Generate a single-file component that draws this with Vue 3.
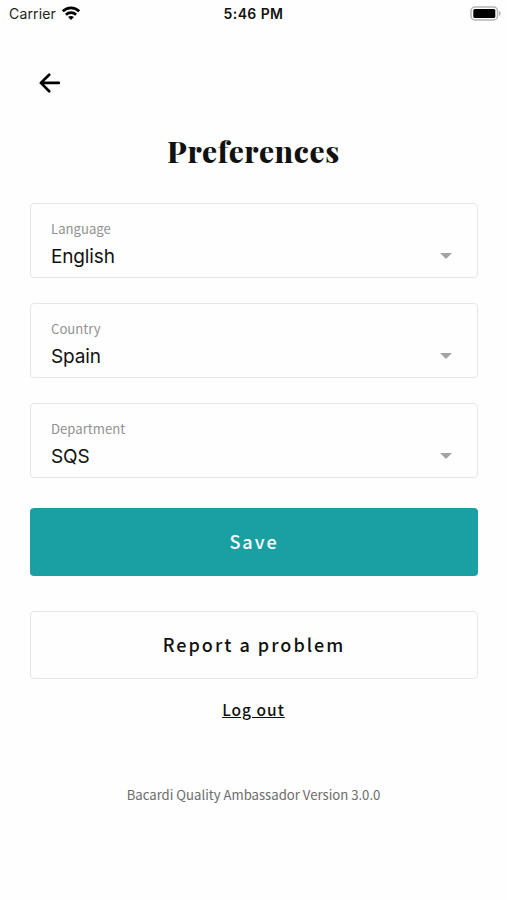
<script setup>
const fields = [
  { label: 'Language', value: 'English' },
  { label: 'Country', value: 'Spain' },
  { label: 'Department', value: 'SQS' },
]
</script>

<template>
  <div class="screen">
    <header class="status">
      <div class="carrier">
        <span>Carrier</span>
        <svg class="wifi" viewBox="0 0 20 15" width="20" height="15">
          <g fill="none" stroke="#000" stroke-width="2.7">
            <path d="M1.8 5.3C6.4 .7 13.6 .7 18.2 5.3" />
            <path d="M4.9 8.7C7.8 6 12.2 6 15.1 8.7" />
          </g>
          <path d="M7.1 11.1C8.8 9.7 11.2 9.7 12.9 11.1L10 14Z" />
        </svg>
      </div>
      <span class="time">5:46 PM</span>
      <div class="power">
        <svg viewBox="0 0 32 16" width="32" height="16">
          <rect x="1" y="1" width="26.5" height="13" rx="4" fill="#fff" stroke="#b4b4b4" stroke-width="1.5" />
          <rect x="3.3" y="3" width="22" height="9" rx="1.5" fill="#000" />
          <path d="M29 5C31.4 6 31.4 9 29 10Z" fill="#b4b4b4" />
        </svg>
      </div>
    </header>

    <button class="back" aria-label="Back">
      <svg viewBox="0 0 22 20" width="22" height="20" fill="none" stroke="#000" stroke-width="2.7" stroke-linecap="round" stroke-linejoin="round">
        <path d="M19.8 9.9H2M10.2 1.7L1.9 9.9L10.2 18.2" />
      </svg>
    </button>

    <h1 class="title">Preferences</h1>

    <main class="form">
      <div v-for="field in fields" :key="field.label" class="field">
        <div class="texts">
          <span class="label">{{ field.label }}</span>
          <span class="value">{{ field.value }}</span>
        </div>
        <svg class="caret" viewBox="0 0 12 6" width="12" height="6"><path d="M0 0H12L6 6Z" fill="#a3a3a3" /></svg>
      </div>
      <button class="button save">Save</button>
      <button class="button report">Report a problem</button>
    </main>

    <a class="logout">Log out</a>
    <footer class="version">Bacardi Quality Ambassador Version 3.0.0</footer>
  </div>
</template>

<style>
body {
  margin: 0;
  background: #fff;
}
</style>

<style scoped>
.screen {
  display: flex;
  flex-direction: column;
  width: 507px;
  height: 900px;
  overflow: hidden;
  background: #fefefe;
  color: #111;
  font-family: "Noto Sans CJK SC", "Noto Sans", sans-serif;
}
button {
  padding: 0;
  border: 0;
  background: none;
  font-family: inherit;
}
svg {
  display: block;
}
.status {
  display: grid;
  grid-template-columns: 1fr auto 1fr;
  height: 28px;
  padding: 0 5px 0 9px;
  box-sizing: border-box;
  align-items: center;
  font: 14px/28px Inter, sans-serif;
}
.carrier {
  display: flex;
  align-items: center;
  gap: 5px;
  letter-spacing: 0.15px;
  color: #222;
}
.wifi {
  margin-top: -2px;
}
.time {
  margin-right: 4px;
  font-weight: 600;
  letter-spacing: 0.4px;
}
.power {
  display: flex;
  justify-content: flex-end;
}
.back {
  align-self: flex-start;
  margin: 45px 0 0 39px;
}
.title {
  margin: 38px 0 0;
  text-align: center;
  font: 800 30px/40px "Playfair Display", "Liberation Serif", serif;
  letter-spacing: 0.7px;
}
.form {
  display: flex;
  flex-direction: column;
  margin: 32px 29px 0 30px;
}
.field {
  display: flex;
  justify-content: space-between;
  align-items: flex-end;
  height: 75px;
  margin-bottom: 25px;
  padding: 0 25px 5px 20px;
  box-sizing: border-box;
  border: 1px solid #e6e6e6;
  border-radius: 4px;
}
.texts {
  display: flex;
  flex-direction: column;
}
.label {
  margin-bottom: 2px;
  font-size: 13.15px;
  line-height: 22px;
  color: #929292;
}
.value {
  font: 19px/30px Inter, sans-serif;
  letter-spacing: -0.15px;
  color: #111;
}
.caret {
  margin-bottom: 13px;
}
.button {
  height: 68px;
  box-sizing: border-box;
  border-radius: 4px;
  font-size: 18px;
  font-weight: 500;
  letter-spacing: 2px;
}
.save {
  margin-top: 5px;
  padding-bottom: 3px;
  background: #1a9fa3;
  color: #fff;
}
.report {
  margin-top: 35px;
  padding-bottom: 3px;
  border: 1px solid #e6e6e6;
  color: #111;
}
.logout {
  align-self: center;
  margin-top: 17px;
  font-size: 15.5px;
  font-weight: 500;
  line-height: 26px;
  letter-spacing: 1px;
  text-decoration: underline;
}
.version {
  margin-top: 62px;
  text-align: center;
  font-size: 13.15px;
  line-height: 22px;
  color: #6c6c6c;
}
</style>
